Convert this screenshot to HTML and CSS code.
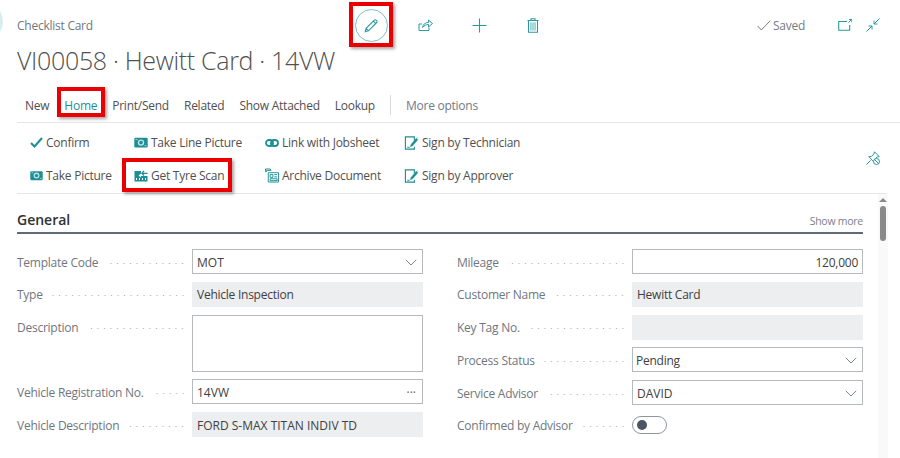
FILE: index.html
```html
<!DOCTYPE html>
<html lang="en">
<head>
    <meta charset="UTF-8">
    <title>Checklist Card</title>
    <link rel="stylesheet" href="styles.css">
</head>
<body>
    <svg class="sprite" xmlns="http://www.w3.org/2000/svg">
        <symbol id="i-picture" viewBox="0 0 14 11"><rect x=".3" y=".8" width="13.400" height="9.700" rx="1.200" fill="currentColor"/><circle cx="7" cy="5.600" r="3.200" fill="#bfe3e5"/><circle cx="7" cy="5.600" r="1.800" fill="currentColor"/><path d="M1.500 2.500h2M10.500 8.700h2" stroke="#bfe3e5" stroke-width=".8"/></symbol>
        <symbol id="i-sign" viewBox="0 0 16 16"><path d="M11 5V1.500H1.500v13H11v-2.500M3.500 12.500h2.500" fill="none" stroke="currentColor" stroke-width="1.200"/><path d="M7.500 9.500l5.500-6.500 1.700 1.500-5.500 6.500-2.400.9zM13.700 2l1.500 1.300" fill="currentColor" stroke="currentColor" stroke-width=".5"/></symbol>
        <symbol id="i-chevron" viewBox="0 0 12 7"><path d="M.8.800L6 6l5.200-5.200" fill="none" stroke="currentColor" stroke-width="1"/></symbol>
    </svg>

    <div class="corner-dot"></div>

    <header class="top-bar">
        <div class="caption">Checklist Card</div>
        <div class="actions">
            <div class="action marked">
                <span class="edit-ring">
                    <svg width="15" height="15" viewBox="0 0 15 15"><path d="M1.200 13.800l.9-3.400 8.200-8.300a1.300 1.300 0 0 1 1.900 0l.5.500a1.300 1.300 0 0 1 0 1.900l-8.200 8.300zM2.100 10.400l2.500 2.500M9.300 3.100l2.600 2.600" fill="none" stroke="currentColor" stroke-width="1.100"/></svg>
                </span>
                <span class="red-box"></span>
            </div>
            <div class="action">
                <svg width="15" height="14" viewBox="0 0 15 14"><path d="M11 9.500v3H1V6h3M4.500 9.500c.5-3.500 3-5 6-5V2l4 3.500-4 3.500V6.500c-2.500 0-4.500 1-6 3z" fill="none" stroke="currentColor" stroke-width="1"/></svg>
            </div>
            <div class="action">
                <svg width="15" height="15" viewBox="0 0 15 15"><path d="M7.500.500v14M.500 7.500h14" fill="none" stroke="currentColor" stroke-width="1.100"/></svg>
            </div>
            <div class="action">
                <svg width="12" height="15" viewBox="0 0 12 15"><path d="M.500 2.500h11M4 2.500V.800h4v1.700M1.500 2.500v11.700h9V2.500" fill="none" stroke="currentColor" stroke-width="1.100"/><path d="M3.200 4.500h5.600v8H3.200z" fill="currentColor" opacity=".55"/><path d="M5 4.500v8M7 4.500v8" stroke="#fff" stroke-width=".6"/></svg>
            </div>
        </div>
        <div class="status">
            <svg class="saved-check" width="14" height="11" viewBox="0 0 14 11"><path d="M.700 6l3.600 4L13.300.700" fill="none" stroke="currentColor" stroke-width="1"/></svg>
            <span>Saved</span>
        </div>
        <div class="window-icons">
            <svg width="14" height="12" viewBox="0 0 14 12"><path d="M9 2.500H.700v8.800h11V6" fill="none" stroke="currentColor" stroke-width="1.100"/><path d="M10.500 3.500l3-3M11 .500h2.800v2.800" fill="none" stroke="currentColor" stroke-width="1"/></svg>
            <svg width="14" height="14" viewBox="0 0 14 14"><path d="M13.500.500L8 6M8 2.500V6h3.500M.500 13.500L6 8M2.500 8H6v3.500" fill="none" stroke="currentColor" stroke-width="1"/></svg>
        </div>
    </header>

    <h1 class="page-title">VI00058 · Hewitt Card · 14VW</h1>

    <nav class="tabs">
        <a class="tab">New</a>
        <a class="tab active">Home<span class="red-box"></span></a>
        <a class="tab">Print/Send</a>
        <a class="tab">Related</a>
        <a class="tab">Show Attached</a>
        <a class="tab">Lookup</a>
        <span class="tab-sep"></span>
        <a class="tab more">More options</a>
    </nav>

    <section class="ribbon">
        <div class="ribbon-grid">
            <a class="cmd">
                <svg width="13" height="11" viewBox="0 0 13 11"><path d="M1 6l3.500 3.500L12 1" fill="none" stroke="currentColor" stroke-width="2"/></svg>
                Confirm
            </a>
            <a class="cmd"><svg width="14" height="11"><use href="#i-picture"/></svg>Take Line Picture</a>
            <a class="cmd">
                <svg width="14" height="8" viewBox="0 0 14 8"><rect x="1" y="1" width="7" height="6" rx="3" fill="none" stroke="currentColor" stroke-width="1.800"/><rect x="6" y="1" width="7" height="6" rx="3" fill="none" stroke="currentColor" stroke-width="1.800"/></svg>
                Link with Jobsheet
            </a>
            <a class="cmd"><svg width="15" height="16"><use href="#i-sign"/></svg>Sign by Technician</a>

            <a class="cmd"><svg width="13" height="11"><use href="#i-picture"/></svg>Take Picture</a>
            <a class="cmd marked">
                <svg width="14" height="12" viewBox="0 0 14 12"><path d="M.500 1h6.500v2.500L4.500 5.500 7 7.500V6h6.500v5.500H.500z" fill="currentColor"/><path d="M13.500 3.300H8.300M10 1L7.800 3.300 10 5.500" fill="none" stroke="currentColor" stroke-width="1.200"/><path d="M2.500 8v2M5.500 8v2M8.500 8v2M11.500 8v2" stroke="#fff" stroke-width="1"/></svg>
                Get Tyre Scan
                <span class="red-box"></span>
            </a>
            <a class="cmd">
                <svg width="14" height="15" viewBox="0 0 15 15"><path d="M.500.500h5l1 1.500h-5v1.500h-1zM3.500 4.500h11v10h-11z" fill="none" stroke="currentColor" stroke-width="1"/><path d="M5.500 6.500h3v3h-3zM10 6.500h3M10 9h3M5.500 11h7.500v2h-7.500z" fill="none" stroke="currentColor" stroke-width="1"/></svg>
                Archive Document
            </a>
            <a class="cmd"><svg width="15" height="16"><use href="#i-sign"/></svg>Sign by Approver</a>
        </div>
        <svg class="pin" width="14" height="14" viewBox="0 0 14 14"><path d="M.500 13.500l4-4M8.500.800l4.700 4.700-2.400.7-2.300 2.700-.2 2.600L2.800 5.600l2.600-.2 2.400-2.300z" fill="none" stroke="currentColor" stroke-width="1"/><circle cx="10.500" cy="10.500" r="3" fill="#fff" stroke="currentColor"/><path d="M8.500 8.500l4 4" stroke="currentColor"/></svg>
    </section>

    <div class="scroll-area">
        <main class="content">
            <div class="section-head">
                <h2>General</h2>
                <a class="show-more">Show more</a>
            </div>
            <div class="form-grid">
                <div class="form-col">
                    <div class="field">
                        <label><span>Template Code</span><i></i></label>
                        <div class="input caps">MOT<svg class="chev" width="12" height="7"><use href="#i-chevron"/></svg></div>
                    </div>
                    <div class="field">
                        <label><span>Type</span><i></i></label>
                        <div class="input readonly">Vehicle Inspection</div>
                    </div>
                    <div class="field tall">
                        <label><span>Description</span><i></i></label>
                        <div class="input"></div>
                    </div>
                    <div class="field">
                        <label><span>Vehicle Registration No.</span><i></i></label>
                        <div class="input caps">14VW<span class="dots">···</span></div>
                    </div>
                    <div class="field">
                        <label><span>Vehicle Description</span><i></i></label>
                        <div class="input readonly caps">FORD S-MAX TITAN INDIV TD</div>
                    </div>
                </div>
                <div class="form-col">
                    <div class="field">
                        <label><span>Mileage</span><i></i></label>
                        <div class="input number">120,000</div>
                    </div>
                    <div class="field">
                        <label><span>Customer Name</span><i></i></label>
                        <div class="input readonly">Hewitt Card</div>
                    </div>
                    <div class="field">
                        <label><span>Key Tag No.</span><i></i></label>
                        <div class="input readonly"></div>
                    </div>
                    <div class="field">
                        <label><span>Process Status</span><i></i></label>
                        <div class="input tight">Pending<svg class="chev" width="12" height="7"><use href="#i-chevron"/></svg></div>
                    </div>
                    <div class="field">
                        <label><span>Service Advisor</span><i></i></label>
                        <div class="input caps">DAVID<svg class="chev" width="12" height="7"><use href="#i-chevron"/></svg></div>
                    </div>
                    <div class="field">
                        <label><span>Confirmed by Advisor</span><i></i></label>
                        <div class="toggle"><b></b></div>
                    </div>
                </div>
            </div>
        </main>
        <div class="scrollbar">
            <div class="arrow"></div>
            <div class="thumb"></div>
        </div>
    </div>
</body>
</html>
```

FILE: styles.css
```css
* {
    box-sizing: border-box;
}

html, body {
    height: 100%;
}

body {
    margin: 0;
    background: #fff;
    color: #505050;
    font-family: "Open Sans", "Noto Sans", sans-serif;
    font-size: 12px;
    letter-spacing: -0.25px;
    overflow: hidden;
    position: relative;
}

.sprite {
    display: none;
}

.corner-dot {
    position: absolute;
    left: -14px;
    top: 8px;
    width: 17px;
    height: 27px;
    border-radius: 50%;
    background: #d8edf2;
}

/* top bar */
.top-bar {
    display: flex;
    align-items: center;
    height: 50px;
    padding: 0 20px 0 17px;
    color: #2b9aa0;
}

.caption {
    flex: 0 0 327px;
    color: #6f7680;
    font-size: 12px;
}

.actions {
    display: flex;
}

.action {
    position: relative;
    display: flex;
    align-items: center;
    justify-content: center;
    width: 54px;
    height: 34px;
}

.edit-ring {
    display: flex;
    align-items: center;
    justify-content: center;
    width: 33px;
    height: 33px;
    border: 1px solid #7cc2c7;
    border-radius: 50%;
}

.red-box {
    position: absolute;
    border: 4px solid #ea0000;
    box-shadow: 2px 2px 3px rgba(0, 0, 0, 0.35);
    pointer-events: none;
}

.action .red-box {
    left: 5px;
    top: -6px;
    width: 44px;
    height: 45px;
}

.status {
    display: flex;
    align-items: center;
    gap: 2px;
    margin-left: auto;
    color: #767c86;
    font-size: 12px;
}

.saved-check {
    color: #767c86;
}

.window-icons {
    display: flex;
    align-items: center;
    gap: 14px;
    margin-left: 33px;
}

.page-title {
    margin: 0;
    padding-left: 17px;
    height: 37px;
    line-height: 21px;
    font-size: 25px;
    font-weight: 300;
    letter-spacing: -0.33px;
    color: #505050;
}

/* tabs */
.tabs {
    display: flex;
    align-items: center;
    gap: 15px;
    height: 36px;
    margin-left: 17px;
    padding: 1px 0 0 8px;
    border-bottom: 1px solid #e6e6e6;
    font-size: 12px;
}

.tab {
    position: relative;
    white-space: nowrap;
    color: #505050;
}

.tab.active {
    color: #1f8f96;
    border-bottom: 2px solid #1f8f96;
    line-height: 15px;
    margin-top: 2px;
}

.tab.active .red-box {
    left: -7px;
    top: -11px;
    width: 48px;
    height: 30px;
}

.tab.more {
    color: #6f7a88;
}

.tab-sep {
    width: 1px;
    height: 20px;
    background: #d6d9dd;
}

/* ribbon */
.ribbon {
    position: relative;
    height: 71px;
    margin-left: 17px;
    margin-right: 13px;
    padding: 3px 0 0 13px;
    border-bottom: 1px solid #e6e6e6;
}

.ribbon-grid {
    display: grid;
    grid-template-columns: 104px 131px 139px auto;
    grid-auto-rows: 33px;
}

.cmd {
    position: relative;
    display: flex;
    align-items: center;
    gap: 3px;
    white-space: nowrap;
    color: #505050;
}

.cmd svg {
    color: #1c8e95;
    flex: none;
}

.cmd.marked .red-box {
    left: -12px;
    top: -1px;
    width: 110px;
    height: 34px;
}

.pin {
    position: absolute;
    right: 7px;
    top: 28px;
    color: #2b9aa0;
}

/* content */
.scroll-area {
    display: flex;
    height: 265px;
}

.content {
    width: 846px;
    margin-left: 17px;
    padding-top: 14px;
}

.section-head {
    display: flex;
    align-items: center;
    justify-content: space-between;
    height: 26px;
    border-bottom: 2px solid #5f6b78;
}

.section-head h2 {
    margin: 0 0 2px;
    font-size: 14px;
    font-weight: 600;
    letter-spacing: 0;
    color: #303030;
}

.show-more {
    margin-top: 1px;
    font-size: 10.500px;
    color: #7b8089;
}

.form-grid {
    display: grid;
    grid-template-columns: 406px 406px;
    column-gap: 34px;
    padding-top: 15px;
}

.form-col {
    display: flex;
    flex-direction: column;
    gap: 7.800px;
}

.field {
    display: flex;
    align-items: flex-start;
    min-height: 25px;
}

.field.tall .input {
    height: 57px;
}

.field label {
    flex: 0 0 175px;
    display: flex;
    align-items: center;
    height: 25px;
    padding: 1px 6px 0 0;
    color: #6f7680;
    white-space: nowrap;
}

.field label i {
    flex: 1;
    height: 3px;
    margin: 2px 0 0 8px;
    background-image: radial-gradient(circle, #b5b8bd 0.6px, transparent 1px);
    background-size: 6.500px 3px;
    background-repeat: repeat-x;
    background-position: right center;
}

.input {
    flex: 1;
    display: flex;
    align-items: center;
    justify-content: space-between;
    height: 25px;
    padding: 1px 4px 0;
    border: 1px solid #b6b9bd;
    background: #fff;
    color: #404040;
}

.input.caps {
    letter-spacing: 0;
}

.input.readonly {
    border-color: #edeef0;
    background: #edeef0;
}

.input.number {
    justify-content: flex-end;
}

.input.tight {
    padding-left: 3px;
}

.chev {
    margin-right: 1px;
    color: #80868e;
}

.dots {
    margin-right: 2px;
    color: #606060;
}

.toggle {
    display: flex;
    align-items: center;
    width: 35px;
    height: 18px;
    margin-top: 3px;
    padding-left: 4px;
    border: 1px solid #8f959c;
    border-radius: 9px;
}

.toggle b {
    width: 10px;
    height: 10px;
    border-radius: 50%;
    background: #4b5563;
}

/* scrollbar */
.scrollbar {
    width: 10px;
    margin-left: 15px;
    background: #f9f9f9;
}

.arrow {
    width: 0;
    margin: 4px 0 0 1px;
    border: 4px solid transparent;
    border-top: 0;
    border-bottom: 4px solid #8a8a8a;
}

.thumb {
    width: 6px;
    height: 35px;
    margin: 4px 0 0 2px;
    border-radius: 3px;
    background: #8a8a8a;
}
```
